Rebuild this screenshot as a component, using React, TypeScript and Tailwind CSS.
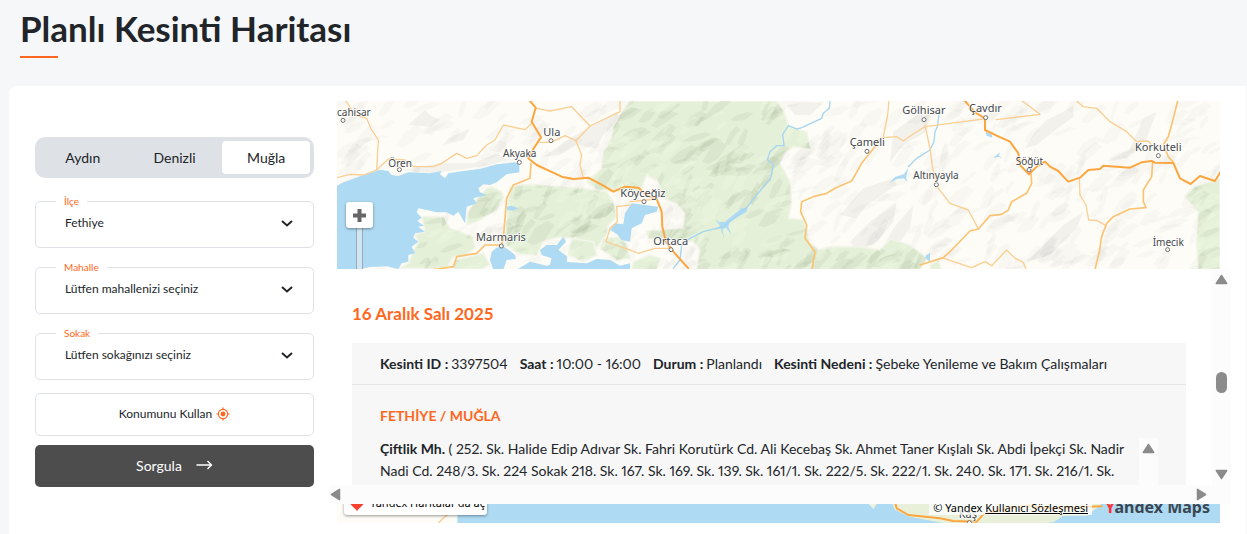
import { useState } from "react";
import clsx from "clsx";

type Point = [number, number];

const CITIES = ["Aydın", "Denizli", "Muğla"];

const FIELDS = [
  { id: "ilce", label: "İlçe", value: "Fethiye" },
  { id: "mahalle", label: "Mahalle", value: "Lütfen mahallenizi seçiniz" },
  { id: "sokak", label: "Sokak", value: "Lütfen sokağınızı seçiniz" },
];

const OUTAGE = [
  { label: "Kesinti ID :", value: "3397504" },
  { label: "Saat :", value: "10:00 - 16:00" },
  { label: "Durum :", value: "Planlandı" },
  { label: "Kesinti Nedeni :", value: "Şebeke Yenileme ve Bakım Çalışmaları" },
];

const TOWNS = [
  { name: "cahisar", x: 21, y: 62, size: 30, dot: [39, 76] },
  { name: "Ören", x: 175, y: 215, size: 30, dot: [208, 224] },
  { name: "Ula", x: 640, y: 122, size: 33, dot: [663, 137] },
  { name: "Akyaka", x: 519, y: 185, size: 30, dot: [568, 202] },
  { name: "Marmaris", x: 438, y: 439, size: 33, dot: [514, 453] },
  { name: "Köyceğiz", x: 871, y: 305, size: 33, dot: [942, 320] },
  { name: "Ortaca", x: 970, y: 450, size: 33, dot: [1023, 464] },
  { name: "Çameli", x: 1559, y: 152, size: 33, dot: [1611, 169] },
  { name: "Gölhisar", x: 1717, y: 58, size: 33, dot: [1782, 74] },
  { name: "Çavdır", x: 1917, y: 50, size: 33, dot: [1967, 68] },
  { name: "Altınyayla", x: 1750, y: 251, size: 30, dot: [1819, 269] },
  { name: "Söğüt", x: 2057, y: 209, size: 30, dot: [2097, 225] },
  { name: "Korkuteli", x: 2415, y: 168, size: 33, dot: [2485, 182] },
  { name: "İmecik", x: 2468, y: 452, size: 30, dot: [2513, 464] },
  { name: "Kaş", x: 1886, y: 1268, size: 33, dot: [1918, 1283] },
];

const WATER = [
  "M21 272L40 262 60 255 100 240 150 224 175 228 185 240 205 243 235 232 300 235 335 228 330 238 345 250 355 235 400 228 450 222 500 208 555 202 568 208 568 232 530 238 500 262 480 270 460 268 445 280 450 292 470 300 430 310 440 325 410 335 405 385 385 350 370 362 350 352 320 352 290 345 265 340 260 352 275 368 262 378 282 392 265 395 285 410 255 415 250 428 265 440 245 455 255 475 235 480 235 500 215 505 205 522 170 514 120 516 80 524H21Z",
  "M485 470L500 458 520 455 532 462 555 480 558 492 530 495 520 524H490L480 495Z",
  "M630 465L650 450 680 450 700 425 708 440 685 465 712 485 708 524H655L665 490 635 480Z",
  "M560 524L600 500 650 512 700 500 770 505 800 492 840 495 870 512 900 505V524Z",
  "M840 405L855 385 880 388 885 355 905 325 985 335 980 350 945 360 935 385 905 400 900 440 875 435 862 418Z",
  "M530 335L545 332 565 340 550 347 532 345Z",
  "M1155 372L1168 382 1185 380 1210 360 1235 340 1252 338 1250 350 1220 368 1198 382 1195 395 1205 420 1188 398 1178 402 1182 430 1172 400 1155 405 1170 392Z",
  "M1678 265L1695 246 1722 238 1735 218 1728 248 1732 262 1722 250 1700 252Z",
  "M1966 110L1985 118 1987 128 1970 122Z",
  "M1990 188L2012 170 2005 182 2018 189 2005 186Z",
  "M1787 482L1800 473V500L1786 490Z",
  "M382 1227H2670V1290H382Z",
];

const FOREST = [
  "M900 18H1340L1362 50 1375 90 1430 112 1442 162 1390 155 1365 175 1350 205 1380 260 1385 320 1375 370 1420 375 1440 440 1465 465 1500 455 1590 455 1650 465 1680 432 1740 450 1790 490 1770 524H1100L1110 460 1090 440 955 430 950 408 1060 400 1065 355 1040 325 1000 310 985 260 950 240 930 290 860 290 800 285 770 260 815 220 820 170 845 130 850 95 878 48Z",
  "M432 325L470 280 485 275 515 290 520 305 500 345 440 380 410 390 415 350Z",
  "M275 365L340 365 360 400 430 425 435 460 400 485 370 485 350 520H210L235 505 250 470 265 440 255 418 285 410Z",
  "M540 275L600 268 760 280 830 290 850 320 860 365 835 390 830 420 800 460 740 430 690 425 640 440 620 480 570 478 530 450 528 380Z",
  "M725 430L790 440 800 480 760 500 715 480Z",
  "M820 430L870 425 890 450 900 490 860 495 810 460Z",
  "M375 495L460 475 480 510 450 524H370Z",
  "M910 500L960 480 990 490 980 524H905Z",
  "M2565 305L2595 275 2640 262 2670 250V524H2605L2600 440 2605 350Z",
  "M1800 510L1825 495 1835 524H1800Z",
];

const MINOR_ROADS = [
  "M48 18L75 60 110 70 122 100 145 135 140 225 100 240 60 238 21 248",
  "M140 225L175 192 225 195 250 215 310 215 335 205 380 175 410 190 440 182 470 150 495 135 520 90 585 104 605 85",
  "M620 40L660 48 725 35 780 93 870 50V18",
  "M780 93L738 137 755 180 750 210 760 248",
  "M630 142L663 142 705 122 738 137",
  "M900 330L860 335 862 380 840 400 828 440 870 455 900 465",
  "M900 320L950 315 982 312",
  "M900 465L925 475 975 460 1022 460",
  "M1677 18L1673 60 1660 125",
  "M1660 128L1700 125 1720 138 1745 120 1785 95 1900 80 1960 72",
  "M1785 90L1800 160 1808 220 1825 280 1860 325 1915 345 1945 402",
  "M2075 18L2085 24 2130 58 1998 74",
  "M2240 18L2260 35 2300 40 2340 80 2390 110 2420 140 2455 138 2465 150",
  "M2248 250L2250 300 2268 330 2276 375 2300 376 2328 392",
  "M1835 488L1925 518 1965 500 1985 512 2030 465 2055 490 2080 502 2088 524",
  "M320 1290L345 1264 380 1244",
];

const ROADS = [
  "M603 205L600 250 550 270 530 310 520 430 514 450 465 450 440 475 380 485 370 515 310 524",
  "M1655 130L1595 205 1565 258 1515 280 1490 295 1450 305 1415 320 1412 350 1430 390 1425 430 1455 470 1446 522",
  "M2103 235L2105 265 2090 295 2045 320 2035 345 2015 358 1980 362 1945 402 1920 408 1865 465 1840 488 1770 510",
  "M2543 18L2530 70 2515 125 2500 150 2515 185 2530 202",
  "M2468 202L2465 245 2440 285 2440 320 2448 338 2400 342 2350 365 2330 385 2315 425 2308 470 2295 524",
];

const HIGHWAYS = [
  "M600 18L617 38 605 80 633 127 610 162 595 190 620 210 695 245 730 252 775 248 820 272 850 290 885 275 925 278 950 300 980 312 995 350 997 395 1008 440 1030 470 1075 520",
  "M1905 18L1935 52 1965 70 1965 105 2000 122 2040 140 2065 175 2070 210 2097 238 2120 215 2145 200 2160 215 2185 228 2205 250 2215 260 2250 248 2275 225 2310 222 2320 212 2400 218 2435 202 2465 198 2475 203 2530 204 2550 250 2582 267 2610 243 2655 258 2670 233",
  "M1695 1222L1700 1240 1735 1260 1830 1270 1870 1278 1940 1280 1960 1258 2010 1245 2090 1232 2160 1240 2315 1234",
];

const RIVERS = [
  "M1500 18L1498 40 1480 55 1475 70 1415 98 1400 102 1375 92 1358 118 1362 152 1340 152 1320 170 1312 195 1330 208 1322 250 1280 300 1250 338 1180 395 1120 410 1080 430 1055 450 1050 495 1030 520",
  "M1828 50L1822 95 1815 110 1812 140 1800 165 1760 190 1735 215",
];

// Small seeded generator keeps the hill shading the same on every render
function makeRelief(seed: number, count: number) {
  let s = seed;
  const next = () => {
    s = (s * 16807) % 2147483647;
    return s / 2147483647;
  };
  return Array.from({ length: count }, () => {
    const x = 21 + next() * 2649;
    const y = 10 + next() * 520;
    const w = 12 + next() * 34;
    const h = 8 + next() * 26;
    const pts: Point[] = [
      [x - w, y + h],
      [x - w * 0.4, y - h * next() * 0.4],
      [x + w * 0.5, y - h],
      [x + w, y - h * 0.6],
      [x + w * 0.3, y + h * next()],
      [x - w * 0.5, y + h * 1.2],
    ];
    return pts.map(([px, py]) => `${Math.round(px)},${Math.round(py)}`).join(" ");
  });
}

const SHADOWS = makeRelief(4217, 560);
const LIGHTS = makeRelief(9931, 360);

const RIDGES = [
  "M215 225L330 205 430 205 500 175 530 195 480 210 380 225 300 235Z",
  "M235 90L285 45 300 60 330 75 300 95Z",
  "M355 130L420 100 400 135 340 150Z",
  "M640 185L720 130 790 90 860 50 870 70 820 120 800 160 740 150 690 180Z",
  "M2085 160L2115 110 2150 75 2200 50 2230 30 2230 65 2170 110 2120 150Z",
  "M2330 200L2400 160 2440 70 2480 50 2450 130 2390 190Z",
  "M1530 360L1600 280 1690 250 1700 270 1610 330 1580 370Z",
  "M1560 440L1620 380 1700 320 1690 380 1640 440 1580 470Z",
  "M1640 490L1690 400 1750 330 1740 400 1680 480Z",
  "M1690 110L1760 60 1800 60 1790 110 1720 150 1680 200Z",
  "M2090 500L2200 390 2260 350 2240 400 2160 480Z",
  "M1370 30L1430 20 1480 25 1440 60 1395 60Z",
];

function MapCanvas() {
  return (
    <svg
      viewBox="21 18 2649 1266"
      preserveAspectRatio="xMidYMid slice"
      className="block h-full w-full"
      aria-hidden="true"
    >
      <defs>
        <clipPath id="forest">
          {FOREST.map((d) => (
            <path key={d} d={d} />
          ))}
        </clipPath>
      </defs>
      <rect x="21" y="18" width="2649" height="1266" fill="#fdfcf6" />
      {RIDGES.map((d) => (
        <path key={d} d={d} fill="#77777a" opacity="0.08" />
      ))}
      {SHADOWS.map((p, i) => (
        <polygon key={i} points={p} fill="#85858a" opacity="0.045" />
      ))}
      {FOREST.map((d) => (
        <path key={d} d={d} fill="#e5f0d8" stroke="#f3f5ea" strokeWidth="5" />
      ))}
      <g clipPath="url(#forest)">
        {SHADOWS.map((p, i) => (
          <polygon key={i} points={p} fill="#a3b295" opacity="0.16" />
        ))}
        {LIGHTS.map((p, i) => (
          <polygon key={i} points={p} fill="#edf8e0" opacity="0.4" />
        ))}
      </g>
      {WATER.map((d) => (
        <path key={d} d={d} fill="#aedbf3" />
      ))}
      <path d="M1610 1220H1645L1630 1242Z" fill="#eef2e4" />
      <path
        d="M1685 1220L1695 1245 1740 1265 1870 1290H2070L2170 1282 2200 1262 2270 1262 2300 1240 2320 1220Z"
        fill="#e8f0da"
      />
      <g fill="none" strokeLinejoin="round" strokeLinecap="round">
        {RIVERS.map((d) => (
          <path key={d} d={d} stroke="#a5d5f1" strokeWidth="4" />
        ))}
        {MINOR_ROADS.map((d) => (
          <path key={d} d={d} stroke="#fbcf94" strokeWidth="4" />
        ))}
        {ROADS.map((d) => (
          <path key={d} d={d} stroke="#fbc373" strokeWidth="5" />
        ))}
        {HIGHWAYS.map((d) => (
          <path key={d} d={d} stroke="#fda63f" strokeWidth="6" />
        ))}
      </g>
      {TOWNS.map((t) => (
        <g key={t.name}>
          <circle
            cx={t.dot[0]}
            cy={t.dot[1]}
            r="6"
            fill="#fff"
            stroke="#6f6f6f"
            strokeWidth="3"
          />
          <text
            x={t.x}
            y={t.y}
            fontSize={t.size}
            fill="#44474c"
            stroke="#fff"
            strokeWidth="5"
            strokeOpacity="0.8"
            paintOrder="stroke"
            className="font-['Noto_Sans',sans-serif]"
          >
            {t.name}
          </text>
        </g>
      ))}
    </svg>
  );
}

function Arrow({ className }: { className?: string }) {
  return (
    <svg
      width="13"
      height="11"
      viewBox="0 0 13 11"
      className={clsx("shrink-0", className)}
      aria-hidden="true"
    >
      <path
        d="M6.5 1.5L11.7 9.5H1.3Z"
        fill="#8b8b8b"
        stroke="#8b8b8b"
        strokeWidth="1.5"
        strokeLinejoin="round"
      />
    </svg>
  );
}

function SelectField({ id, label, value }: (typeof FIELDS)[number]) {
  return (
    <fieldset className="rounded-[5px] border border-[#dee2e6]">
      <legend className="ml-5 h-[18px] px-2 text-[10px] leading-[18px] text-[#ff6720]">
        <label htmlFor={id}>{label}</label>
      </legend>
      <div className="grid h-[37px] items-start">
        <select
          id={id}
          className="col-start-1 row-start-1 h-[26px] w-full appearance-none bg-transparent pr-10 pl-[29px] text-[12px] outline-none"
        >
          <option>{value}</option>
        </select>
        <svg
          width="12"
          height="26"
          viewBox="0 0 12 26"
          className="pointer-events-none col-start-1 row-start-1 mr-5 justify-self-end"
          aria-hidden="true"
        >
          <path d="M1 11L6 15.5 11 11" fill="none" stroke="#212529" strokeWidth="2" />
        </svg>
      </div>
    </fieldset>
  );
}

function OutagePopup() {
  return (
    <div className="absolute top-[168px] -right-[11px] bottom-[19px] -left-2 flex flex-col bg-white">
      <div className="flex min-h-0 flex-1">
        <div className="min-w-0 flex-1 overflow-hidden pr-[26px] pl-[23px]">
          <h2 className="mt-8 text-[17px] leading-[26px] font-bold text-[#ff6720]">
            16 Aralık Salı 2025
          </h2>
          <div className="mt-4 bg-[#f7f7f7] text-[14px] proportional-nums">
            <dl className="flex h-[42px] items-center gap-3 border-b border-[#e5e5e5] px-7 whitespace-nowrap">
              {OUTAGE.map((o) => (
                <div key={o.label} className="flex gap-[3px]">
                  <dt className="font-bold">{o.label}</dt>
                  <dd>{o.value}</dd>
                </div>
              ))}
            </dl>
            <div className="px-7 pt-5">
              <h3 className="text-[14px] leading-[22px] font-bold text-[#ff6720]">
                FETHİYE / MUĞLA
              </h3>
              <div className="mt-[11px] flex h-11">
                <p className="min-w-0 flex-1 leading-[22px]">
                  <b>Çiftlik Mh.</b> ( 252. Sk. Halide Edip Adıvar Sk. Fahri
                  Korutürk Cd. Ali Kecebaş Sk. Ahmet Taner Kışlalı Sk. Abdi
                  İpekçi Sk. Nadir
                  <br />
                  Nadi Cd. 248/3. Sk. 224 Sokak 218. Sk. 167. Sk. 169. Sk. 139.
                  Sk. 161/1. Sk. 222/5. Sk. 222/1. Sk. 240. Sk. 171. Sk. 216/1.
                  Sk.
                </p>
                <div className="flex h-[60px] w-[19px] justify-center bg-[#fcfcfc] pt-[5px]">
                  <Arrow />
                </div>
              </div>
              <div className="h-5" />
            </div>
          </div>
        </div>
        <div className="flex w-[19px] flex-col items-center bg-[#fcfcfc] py-[5px]">
          <Arrow />
          <div className="mt-[87px] h-[21px] w-[11px] rounded-full bg-[#8b8b8b]" />
          <Arrow className="mt-auto rotate-180" />
        </div>
      </div>
      <div className="flex h-[19px] items-center justify-between bg-[#fcfcfc] pr-[23px]">
        <Arrow className="-rotate-90" />
        <Arrow className="rotate-90" />
      </div>
    </div>
  );
}

export default function App() {
  const [city, setCity] = useState("Muğla");

  return (
    <div className="flex min-h-screen flex-col bg-[#f5f7f9] font-['Lato',sans-serif] text-[#212529]">
      <header className="px-5 pt-1">
        <h1 className="text-[35px] leading-[48px] font-bold">
          Planlı Kesinti Haritası
        </h1>
        <div className="mt-1 h-0.5 w-[38px] bg-[#ff6720]" />
      </header>

      <main className="mt-7 mr-px ml-[9px] flex flex-1 gap-[23px] rounded-tl-[8px] bg-white px-[26px] pt-[15px] pb-[11px]">
        <form
          className="w-[279px] shrink-0 pt-9"
          onSubmit={(e) => e.preventDefault()}
        >
          <div className="flex h-[41px] gap-1 rounded-[10px] bg-[#dee2e6] p-1">
            {CITIES.map((c) => (
              <button
                key={c}
                type="button"
                onClick={() => setCity(c)}
                className={clsx(
                  "flex-1 rounded-[4px] text-[14px]",
                  city === c && "bg-white",
                )}
              >
                {c}
              </button>
            ))}
          </div>
          <div className="mt-[14px] flex flex-col gap-[10px]">
            {FIELDS.map((f) => (
              <SelectField key={f.id} {...f} />
            ))}
          </div>
          <button
            type="button"
            className="mt-[13px] flex h-[43px] w-full items-center justify-center gap-1 rounded-[5px] border border-[#dee2e6] pb-0.5 text-[12px]"
          >
            Konumunu Kullan
            <svg width="14" height="14" viewBox="0 0 14 14" fill="none" aria-hidden="true">
              <circle cx="7" cy="7" r="4.7" stroke="#ff6720" strokeWidth="1.2" />
              <circle cx="7" cy="7" r="2.4" fill="#ff6720" />
              <path d="M7 .5v2M7 11.5v2M.5 7h2M11.5 7h2" stroke="#ff6720" strokeWidth="1.2" />
            </svg>
          </button>
          <button
            type="submit"
            className="mt-[9px] flex h-[42px] w-full items-center justify-center gap-[14px] rounded-[5px] bg-[#4d4d4d] pb-0.5 text-[14px] text-white"
          >
            Sorgula
            <svg width="17" height="10" viewBox="0 0 17 10" fill="none" aria-hidden="true">
              <path d="M.5 5H15.5M11.5 1L15.5 5 11.5 9" stroke="#fff" strokeWidth="1.4" />
            </svg>
          </button>
        </form>

        <section className="relative h-[422px] min-w-0 flex-1" aria-label="Harita">
          <MapCanvas />
          <div className="absolute top-[120px] left-[19px] h-[60px] w-[7px] border-x border-[#9aa9b4] bg-[#cfe6f4]" />
          <button
            type="button"
            aria-label="Yakınlaştır"
            className="absolute top-[101px] left-[9px] flex h-[26px] w-[27px] items-center justify-center rounded-[3px] bg-white shadow-[0_1px_3px_rgba(0,0,0,0.4)]"
          >
            <svg width="13" height="13" viewBox="0 0 13 13" aria-hidden="true">
              <path d="M6.5 0V13M0 6.5H13" stroke="#666" strokeWidth="4" />
            </svg>
          </button>
          <a
            href="#harita"
            className="absolute bottom-2 left-[7px] flex h-7 w-[143px] items-center gap-[6px] rounded-[3px] bg-white pt-1 pl-[6px] font-['Noto_Sans',sans-serif] text-[11px] whitespace-nowrap text-black shadow-[0_1px_3px_rgba(0,0,0,0.4)]"
          >
            <svg width="14" height="16" viewBox="0 0 14 16" className="shrink-0" aria-hidden="true">
              <path d="M7 0a7 7 0 0 1 7 7c0 3-3 4-7 9C3 11 0 10 0 7a7 7 0 0 1 7-7Z" fill="#f8412e" />
            </svg>
            Yandex Haritalar'da aç
          </a>
          <p className="absolute right-[128px] bottom-2 bg-white/75 px-1 font-['Noto_Sans',sans-serif] text-[11px] leading-[15px] whitespace-nowrap text-black">
            © Yandex{" "}
            <a href="#sozlesme" className="underline">
              Kullanıcı Sözleşmesi
            </a>
          </p>
          <p className="absolute right-[10px] bottom-1 font-['Noto_Sans',sans-serif] text-[16px] leading-6 font-bold whitespace-nowrap text-[#3b4651]">
            <span className="text-[#f33]">Y</span>andex Maps
          </p>
          <OutagePopup />
        </section>
      </main>
    </div>
  );
}
